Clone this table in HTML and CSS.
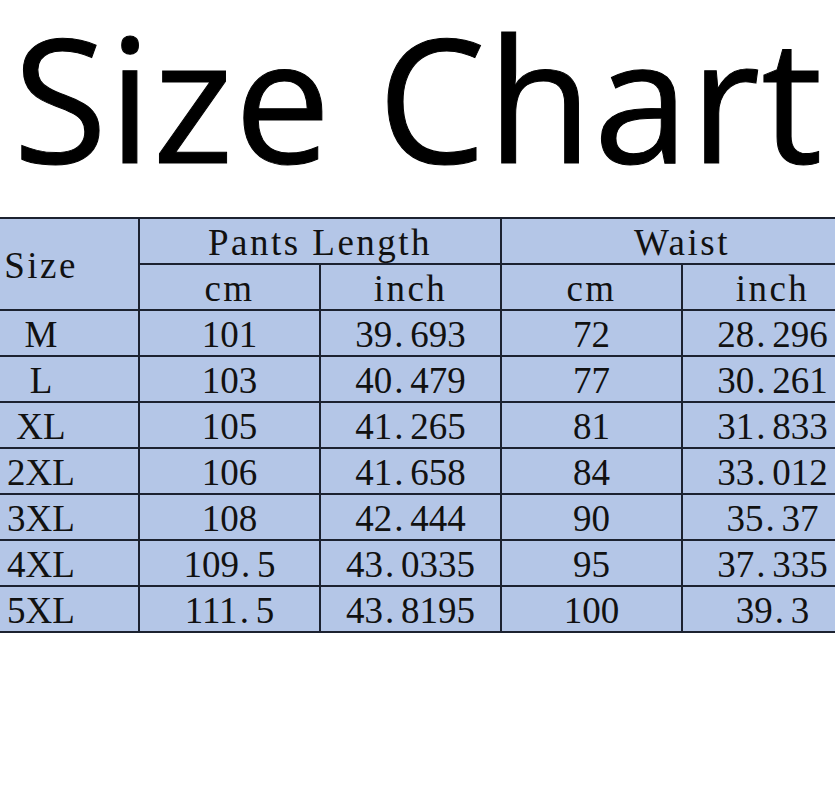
FILE: index.html
```html
<!DOCTYPE html>
<html>
<head>
<meta charset="utf-8">
<link rel="stylesheet" href="styles.css">
</head>
<body>
<div class="page">
  <h1 class="title">Size Chart</h1>
  <div class="chart-wrap">
    <table class="chart">
      <colgroup>
        <col class="c-size"><col class="c-val"><col class="c-val"><col class="c-val"><col class="c-val">
      </colgroup>
      <thead>
        <tr>
          <th rowspan="2" class="lbl">Size</th>
          <th colspan="2" class="lbl">Pants Length</th>
          <th colspan="2" class="lbl">Waist</th>
        </tr>
        <tr>
          <th class="lbl">cm</th><th class="lbl">inch</th><th class="lbl">cm</th><th class="lbl">inch</th>
        </tr>
      </thead>
      <tbody>
        <tr><td>M</td><td>101</td><td>39<span class="pt">.</span>693</td><td>72</td><td>28<span class="pt">.</span>296</td></tr>
        <tr><td>L</td><td>103</td><td>40<span class="pt">.</span>479</td><td>77</td><td>30<span class="pt">.</span>261</td></tr>
        <tr><td>XL</td><td>105</td><td>41<span class="pt">.</span>265</td><td>81</td><td>31<span class="pt">.</span>833</td></tr>
        <tr><td>2XL</td><td>106</td><td>41<span class="pt">.</span>658</td><td>84</td><td>33<span class="pt">.</span>012</td></tr>
        <tr><td>3XL</td><td>108</td><td>42<span class="pt">.</span>444</td><td>90</td><td>35<span class="pt">.</span>37</td></tr>
        <tr><td>4XL</td><td>109<span class="pt">.</span>5</td><td>43<span class="pt">.</span>0335</td><td>95</td><td>37<span class="pt">.</span>335</td></tr>
        <tr><td>5XL</td><td>111<span class="pt">.</span>5</td><td>43<span class="pt">.</span>8195</td><td>100</td><td>39<span class="pt">.</span>3</td></tr>
      </tbody>
    </table>
  </div>
</div>
</body>
</html>
```

FILE: styles.css
```css
html, body {
  margin: 0;
  padding: 0;
  background: #ffffff;
}

.page {
  width: 835px;
  height: 800px;
  overflow: hidden;
}

.title {
  margin: 0;
  padding: 0 0 0 13px;
  font-family: "Open Sans", "Noto Sans", sans-serif;
  font-weight: 400;
  font-size: 172px;
  line-height: 192px;
  height: 217px;
  letter-spacing: 1px;
  color: #000;
  white-space: nowrap;
  -webkit-text-stroke: 1px #000;
}

.chart-wrap {
  margin-left: -58px;
  width: 930px;
}

.chart {
  border-collapse: collapse;
  table-layout: fixed;
  width: 922px;
  background: #b4c6e7;
  font-family: "Liberation Serif", "Times New Roman", serif;
  font-size: 37px;
  color: #111;
}

.c-size { width: 196px; }
.c-val { width: 181px; }

.chart th,
.chart td {
  border: 2px solid #1c2230;
  height: 40px;
  padding: 4px 0 0;
  text-align: center;
  vertical-align: middle;
  font-weight: 400;
  line-height: 40px;
  white-space: nowrap;
}

.chart .lbl {
  letter-spacing: 2.5px;
}

.pt {
  display: inline-block;
  width: 18px;
  text-align: left;
  padding-left: 2px;
  box-sizing: border-box;
}
```
